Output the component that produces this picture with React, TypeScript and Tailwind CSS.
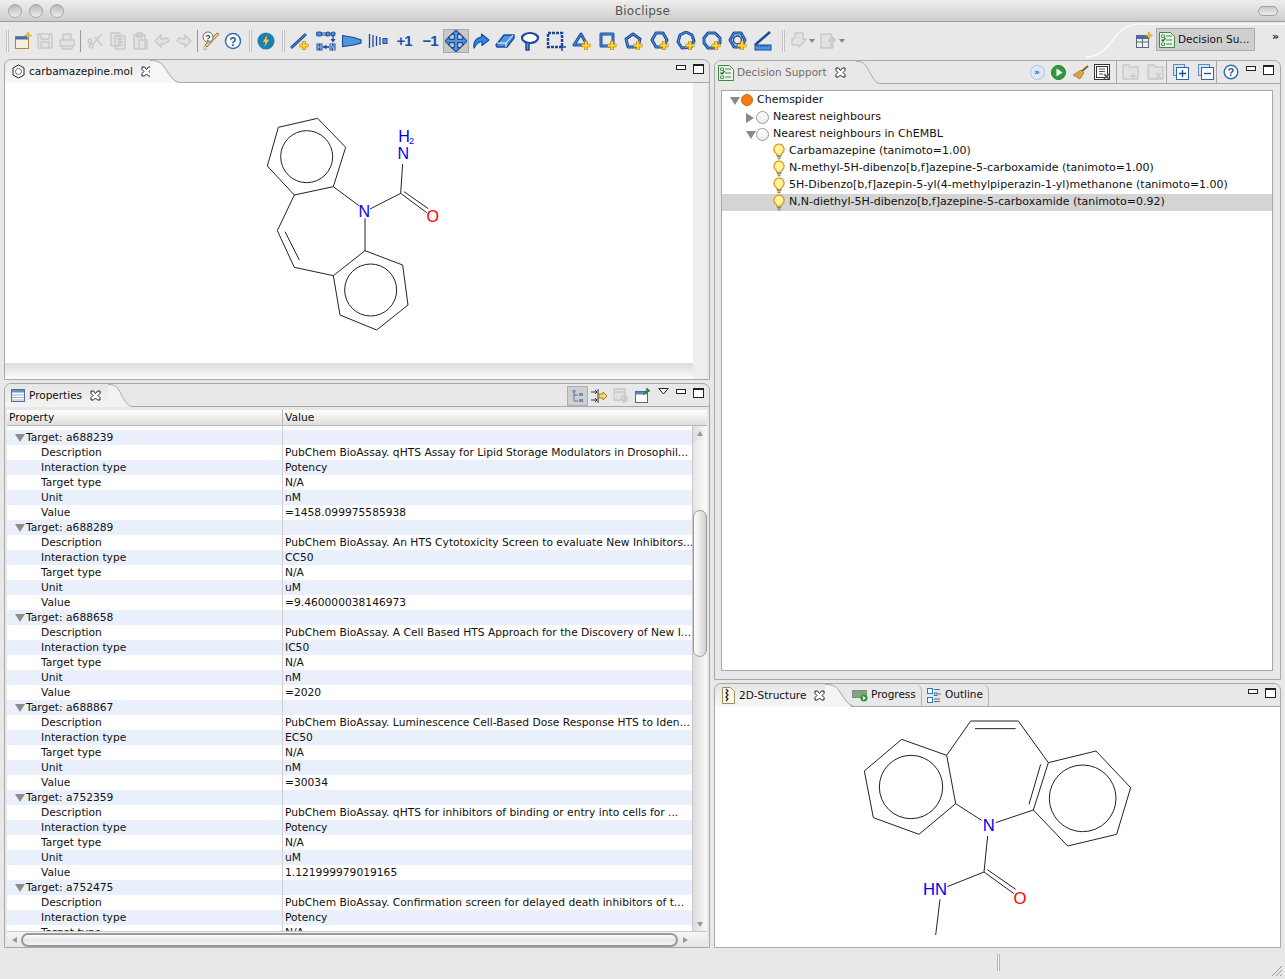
import React from "react";

const F = "font-['DejaVu_Sans',sans-serif]";
const B = "#1b4a9c";
const L = "#4d96de";

function Ic({ children, s = 20 }: { children: React.ReactNode; s?: number }) {
  return <svg width={s} height={s} viewBox="0 0 20 20" fill="none" className="shrink-0">{children}</svg>;
}
const Plus = () => (
  <g>
    <path d="M14 10v9M9.500 14.500h9" stroke="#c98a00" strokeWidth="3.600" />
    <path d="M14 10.500v8M10 14.500h8" stroke="#ffd83a" strokeWidth="1.800" />
  </g>
);
const Poly = ({ pts }: { pts: string }) => (
  <g>
    <polygon points={pts} stroke={B} strokeWidth="3" strokeLinejoin="round" />
    <polygon points={pts} stroke={L} strokeWidth="1" strokeLinejoin="round" />
  </g>
);
const RingPlus = ({ pts }: { pts: string }) => <Ic><Poly pts={pts} /><Plus /></Ic>;

const Grey = ({ d }: { d: string }) => (
  <Ic><path d={d} stroke="#c9c9c9" strokeWidth="1.400" fill="#e2e2e2" strokeLinejoin="round" /></Ic>
);

const icons: Record<string, React.ReactNode> = {
  new: (
    <Ic>
      <rect x="2.500" y="5.500" width="13" height="12" fill="#f5f0dd" stroke="#a8883c" />
      <rect x="2.500" y="5.500" width="13" height="3" fill="#3d6fb5" />
      <path d="M15 1l1 2.500 2.500 1-2.500 1-1 2.500-1-2.500-2.500-1 2.500-1z" fill="#f6c625" stroke="#b58a10" strokeWidth=".5" />
    </Ic>
  ),
  save: <Grey d="M3 3h14v14H3zM6 3v5h8V3M6 17v-6h8v6" />,
  print: <Grey d="M6 3h8v6H6zM3 9h14v6H3zM5 15h10v3H5z" />,
  cut: <Grey d="M16 3L7 13M9 6l7 9M5 13a2 2 0 1 0 .1 0M4 8a2 2 0 1 0 .1 0" />,
  copy: <Grey d="M3 2h9v13H3zM7 5h10v13H7zM9 8h6M9 11h6M9 14h6" />,
  paste: <Grey d="M4 4h11v14H4zM7 2h5v4H7zM9 9h8v9H9z" />,
  undo: <Grey d="M9 4L3 10l6 6v-3h3l5-3-2-3-6 1z" />,
  redo: <Grey d="M11 4l6 6-6 6v-3H8l-5-3 2-3 6 1z" />,
  wiz: (
    <Ic>
      <path d="M18 3l-12 13-2-2L16 2z" fill="#f1cc8f" stroke="#9a7a3a" />
      <circle cx="7" cy="6" r="5" fill="#fff" stroke="#6a6a6a" />
      <text x="7" y="9.500" fontSize="9" fontWeight="700" textAnchor="middle" fill="#444" fontFamily="Liberation Sans">?</text>
      <path d="M3 15l3 3-3 1z" fill="#f3e9c0" stroke="#888" strokeWidth=".5" />
    </Ic>
  ),
  help: (
    <Ic>
      <circle cx="10" cy="10" r="7.500" fill="#fff" stroke="#2f6fb2" strokeWidth="1.500" />
      <text x="10" y="14.500" fontSize="12" fontWeight="700" textAnchor="middle" fill="#1f5a9c" fontFamily="Liberation Sans">?</text>
    </Ic>
  ),
  bolt: (
    <Ic s={18}>
      <circle cx="10" cy="10" r="9.500" fill="#1f7fb5" />
      <path d="M11.500 3L6.500 11h3l-1.500 6 5.500-8.500h-3z" fill="#fbd02c" />
    </Ic>
  ),
  bond: (
    <Ic>
      <path d="M1 17L16 3" stroke={B} strokeWidth="3" />
      <path d="M1 17L16 3" stroke={L} strokeWidth="1" />
      <Plus />
    </Ic>
  ),
  blocks: (
    <Ic>
      <g fill={L} stroke={B} strokeWidth="1.200">
        <rect x=".6" y="1" width="5" height="4" rx="1.500" />
        <circle cx="12" cy="3" r="2" />
        <circle cx="17" cy="3" r="2" />
      </g>
      <path d="M5.500 2h4.500M5.500 4h4.500M17 5v5" stroke={B} strokeWidth="1.100" />
      <path d="M14.500 8l2.500 3.500L19.500 8z" fill={B} />
      <g fill={B}>
        <rect x=".5" y="12.500" width="6" height="7" />
        <rect x="13.500" y="12.500" width="6" height="7" />
      </g>
      <path d="M2 13v6M5 13v6M2 16h3M15 19v-6l3 6v-6" stroke="#bcd8f6" strokeWidth=".9" />
      <path d="M7 16h6" stroke={B} strokeWidth="1.600" />
      <path d="M10.500 13.500L7 16l3.500 2.500z" fill={B} />
    </Ic>
  ),
  wedge: <Ic><path d="M0.500 4.500L12 6.500l7 2.500v3l-7 2-11.500 1.500z" fill={L} stroke={B} strokeWidth="1.200" /></Ic>,
  hash: (
    <Ic>
      <path d="M1.500 3v14M5 4v12M8.500 5v10M12 6v8" stroke={B} strokeWidth="1.300" />
      <rect x="15" y="7.500" width="4" height="5" fill={L} stroke={B} />
    </Ic>
  ),
  plus1: <span className="font-['Liberation_Sans',sans-serif] font-bold text-[15px] leading-none tracking-[-1px] text-[#1b52a8]">+1</span>,
  minus1: <span className="font-['Liberation_Sans',sans-serif] font-bold text-[15px] leading-none tracking-[-1px] text-[#1b52a8]">−1</span>,
  move: (
    <Ic s={22}>
      <path d="M10 0l4 4h-2.500v4.500H16V6l4 4-4 4v-2.500h-4.500V16H14l-4 4-4-4h2.500v-4.500H4V14l-4-4 4-4v2.500h4.500V4H6z" fill={L} stroke={B} strokeWidth="1" />
      <path d="M3 7L7 3M13 3l4 4M17 13l-4 4M7 17l-4-4" stroke={B} strokeWidth="1" />
    </Ic>
  ),
  rotate: (
    <Ic>
      <path d="M3 17C2 10 6 6.500 10.500 6V3l7.500 6-7 5.500v-4C8 10.500 5.500 13 3 17z" fill="#2f8ae6" stroke={B} strokeWidth="1.200" strokeLinejoin="round" />
    </Ic>
  ),
  eraser: (
    <Ic>
      <path d="M1 14L9 4h10v3l-7 9H2z" fill={L} stroke={B} strokeWidth="1.500" strokeLinejoin="round" />
      <path d="M2 12h9l7-8M11 12v4" stroke="#fff" strokeWidth="1" />
    </Ic>
  ),
  lasso: (
    <Ic>
      <ellipse cx="10" cy="7" rx="8" ry="5" fill="#fff" stroke={B} strokeWidth="2.200" />
      <path d="M6 12v7h3v-6" fill={L} stroke={B} strokeWidth="1.500" />
    </Ic>
  ),
  rect: (
    <Ic>
      <rect x="2" y="2" width="14" height="14" stroke={B} strokeWidth="2.500" strokeDasharray="3 1" />
      <path d="M13 16h7M16 13v7" stroke={B} strokeWidth="1.500" />
    </Ic>
  ),
  tri: <RingPlus pts="9,3 2,14 15,14" />,
  sq: <RingPlus pts="3,3 15,3 15,15 3,15" />,
  pent: <RingPlus pts="9,3 16,8 14,16 4,16 2,8" />,
  hex: <RingPlus pts="6,2 13,2 17,9 13,16 6,16 2,9" />,
  hept: <RingPlus pts="10,1 16,4 18,10 15,16 6,17 2,11 4,4" />,
  oct: <RingPlus pts="6,2 13,2 18,7 18,12 13,17 6,17 2,12 2,7" />,
  benz: (
    <Ic>
      <Poly pts="6,2 13,2 17,9 13,16 6,16 2,9" />
      <circle cx="9.500" cy="9" r="4" stroke={B} strokeWidth="1.500" />
      <Plus />
    </Ic>
  ),
  ruler: (
    <Ic>
      <path d="M1 14L16 1" stroke={B} strokeWidth="2.500" />
      <rect x="1" y="14" width="16" height="5" fill={L} stroke={B} />
      <path d="M4 14v2M7 14v2M10 14v2M13 14v2" stroke={B} />
    </Ic>
  ),
  back: <Grey d="M7 2h8v6h3l-7 8-1-2H4V8l3-1z" />,
  fwd: <Grey d="M3 3h10v4l4 1-4 1v8H3zM11 10l3-5 3 5h-2v7h-2v-7z" />,
};

function T({ i, w, cls = "" }: { i: string; w: string; cls?: string }) {
  return <div className={`flex items-center justify-center h-[24px] ${w} ${cls}`}>{icons[i]}</div>;
}
const Dark = ({ cls }: { cls: string }) => <div className={`w-[1px] h-[22px] bg-[#9a9a9a] ${cls}`} />;
const Handle = ({ cls }: { cls: string }) => (
  <div className={`w-[3px] h-[22px] border-x border-x-[#c2c2c2] bg-[#f4f4f4] ${cls}`} />
);
const Drop = () => <div className="w-[8px] h-[24px] flex items-center"><div className="w-0 h-0 border-x-[3px] border-x-transparent border-t-[4px] border-t-[#888]" /></div>;

function Cross() {
  return (
    <svg width="11" height="11" viewBox="0 0 11 11" className="shrink-0">
      <path d="M1 1h2.500L5.500 3.500 7.500 1H10v2.500L8 5.500l2 2V10H7.500l-2-2-2 2H1V7.500l2-2-2-2z" fill="#fff" stroke="#222" strokeWidth="1" />
    </svg>
  );
}
const MinMax = () => (
  <div className="flex items-start gap-[7px] pt-[4px]">
    <div className="w-[10px] h-[5px] border border-[#222] bg-white mt-[1px]" />
    <div className="w-[11px] h-[10px] border border-[#222] border-t-2 bg-white" />
  </div>
);

function Curve({ fill, w = 30 }: { fill: string; w?: number }) {
  return (
    <svg width={w} height="23" viewBox="0 0 30 23" preserveAspectRatio="none" className="shrink-0">
      <path d="M0 0C8 0 11 2 15 8C20 16 24 22 30 22.500V23H0z" fill={fill} />
      <path d="M0 .5C8 .5 11 2 15 8C20 16 24 22 30 22.500" stroke="#a4a4a4" fill="none" />
    </svg>
  );
}

const BenzTab = (
  <svg width="15" height="15" viewBox="0 0 15 15" fill="none">
    <polygon points="7.500,1 13,4 13,11 7.500,14 2,11 2,4" stroke="#222" fill="#fff" />
    <circle cx="7.500" cy="7.500" r="3" stroke="#666" />
  </svg>
);
const TableTab = (
  <svg width="14" height="13" viewBox="0 0 14 13" fill="none">
    <rect x=".5" y=".5" width="13" height="12" fill="#fff" stroke="#50709a" />
    <rect x="1" y="1" width="12" height="2.500" fill="#6a8fc0" />
    <path d="M1 6h12M1 8.500h12M1 11h12" stroke="#9db2cc" />
  </svg>
);
const DecisionIcon = (
  <svg width="16" height="16" viewBox="0 0 16 16" fill="none" className="shrink-0">
    <path d="M.5 .5h11l4 4v11H.5z" fill="#eaf5ea" stroke="#3f8a48" />
    <path d="M2.500 3h3v2.500h-3zM2.500 11h3v2.500h-3z" fill="#fff" stroke="#4c9a54" />
    <path d="M7 4h6M7 8h6M7 12h6" stroke="#3f8a48" />
    <path d="M2.500 7.500l1.500 1.500L6.500 6" stroke="#1e6b28" strokeWidth="1.300" />
  </svg>
);
const StructTab = (
  <svg width="13" height="17" viewBox="0 0 13 17" fill="none">
    <path d="M.5 .5h8l4 4v12H.5z" fill="#fbf7ea" stroke="#a28c5c" />
    <path d="M4 2l2 2-2 2 2 2-2 2 2 2-2 2" stroke="#222" strokeWidth="1.200" />
  </svg>
);
const ProgressTab = (
  <svg width="16" height="13" viewBox="0 0 16 13" fill="none">
    <rect x=".5" y="1.500" width="14" height="7" fill="#7fa57f" stroke="#888" />
    <circle cx="12" cy="9" r="3.500" fill="#2f9a3c" />
    <path d="M11 7l3 2-3 2z" fill="#fff" />
  </svg>
);
const OutlineTab = (
  <svg width="14" height="15" viewBox="0 0 14 15" fill="none">
    <rect x=".5" y=".5" width="5" height="5" fill="#fff" stroke="#2a78c8" />
    <rect x=".5" y="9.500" width="5" height="5" fill="#fff" stroke="#2a78c8" />
    <rect x="7.500" y="5" width="2.500" height="2.500" stroke="#2a78c8" />
    <path d="M7 1.500h6M11 6h3M7 11h6M7 13.500h6" stroke="#666" />
  </svg>
);

function TabLabel({ icon, label, w, dim, pl = "pl-[4px]" }: { icon: React.ReactNode; label: string; w: string; dim?: boolean; pl?: string }) {
  return (
    <div className={`flex items-center h-full ${pl} ${w} rounded-tl-[7px]`}>
      <div className="w-[18px] flex justify-center shrink-0">{icon}</div>
      <span className={`ml-[2px] text-[10.5px] whitespace-nowrap ${dim ? "text-[#6e6e6e]" : "text-[#111]"}`}>{label}</span>
      <div className="ml-[8px]"><Cross /></div>
    </div>
  );
}

function Sep() {
  return <div className="w-[1px] h-full bg-[#a8a8a8]" />;
}

const A = ({ x, children }: { x: string; children: React.ReactNode }) => (
  <div className={`h-full flex items-center justify-center ${x}`}>{children}</div>
);

const groups: [string, string, string][] = [
  ["a688239", "PubChem BioAssay. qHTS Assay for Lipid Storage Modulators in Drosophil...", "Potency|nM|=1458.099975585938"],
  ["a688289", "PubChem BioAssay. An HTS Cytotoxicity Screen to evaluate New Inhibitors...", "CC50|uM|=9.460000038146973"],
  ["a688658", "PubChem BioAssay. A Cell Based HTS Approach for the Discovery of New I...", "IC50|nM|=2020"],
  ["a688867", "PubChem BioAssay. Luminescence Cell-Based Dose Response HTS to Iden...", "EC50|nM|=30034"],
  ["a752359", "PubChem BioAssay. qHTS for inhibitors of binding or entry into cells for ...", "Potency|uM|1.121999979019165"],
  ["a752475", "PubChem BioAssay. Confirmation screen for delayed death inhibitors of t...", "Potency|uM|1"],
];

const Tri = ({ open, c = "#8c8c8c" }: { open: boolean; c?: string }) =>
  open ? (
    <div className="w-0 h-0 border-x-[5px] border-x-transparent border-t-[8px]" style={{ borderTopColor: c }} />
  ) : (
    <div className="w-0 h-0 border-y-[5px] border-y-transparent border-l-[8px]" style={{ borderLeftColor: c }} />
  );

function Row({ a, b, blue, group }: { a: string; b: string; blue: boolean; group?: boolean }) {
  return (
    <div className={`flex h-[15px] leading-[15px] text-[10.7px] text-[#111] whitespace-nowrap ${blue ? "bg-[#e9f0fc]" : "bg-white"}`}>
      <div className={`w-[276px] shrink-0 flex items-center border-r border-r-[#cfcfcf] ${group ? "pl-[8px]" : "pl-[34px]"}`}>
        {group && <div className="mr-[1px] w-[10px]"><Tri open /></div>}
        <span>{a}</span>
      </div>
      <div className="pl-[2px]">{b}</div>
    </div>
  );
}

function PropTable() {
  const rows: React.ReactNode[] = [];
  groups.forEach(([t, d, v]) => {
    const [it, u, val] = v.split("|");
    rows.push(<Row key={t} a={`Target: ${t}`} b="" blue group />);
    rows.push(<Row key={t + "d"} a="Description" b={d} blue={false} />);
    rows.push(<Row key={t + "i"} a="Interaction type" b={it} blue />);
    rows.push(<Row key={t + "t"} a="Target type" b="N/A" blue={false} />);
    rows.push(<Row key={t + "u"} a="Unit" b={u} blue />);
    rows.push(<Row key={t + "v"} a="Value" b={val} blue={false} />);
  });
  return (
    <div className="flex-1 min-h-0 overflow-hidden">
      <div className="-mt-[11px]">
        <Row a="" b="" blue={false} />
        {rows}
      </div>
    </div>
  );
}

const Benzene = ({ pts, c }: { pts: string; c: [number, number, number] }) => (
  <g>
    <polygon points={pts} />
    <circle cx={c[0]} cy={c[1]} r={c[2]} />
  </g>
);

function MolA() {
  return (
    <svg width="210" height="230" viewBox="0 0 630 690" className="ml-[245px] mt-[27px]">
      <g fill="none" stroke="#222" strokeWidth="3">
        <Benzene pts="85,52 203,25 287,112 250,230 133,255 52,168" c={[170, 140, 78]} />
        <Benzene pts="345,422 458,465 474,585 380,660 270,615 250,497" c={[362, 540, 78]} />
        <path d="M133,255L82,362L133,472L250,497M105,365L148,450M250,230L328,288M345,325L345,422M360,297L452,250L458,162M452,250L530,308M462,245L535,296" />
      </g>
      <g fontFamily="Liberation Sans" fontSize="48" textAnchor="middle">
        <text x="343" y="322" fill="#0000ff">N</text>
        <text x="460" y="148" fill="#0000ff">N</text>
        <text x="462" y="95" fill="#0000ff">H</text>
        <text x="485" y="101" fontSize="28" fill="#0000ff">2</text>
        <text x="548" y="336" fill="#ff0000">O</text>
      </g>
    </svg>
  );
}

function MolB() {
  return (
    <svg width="300" height="235" viewBox="0 0 900 705" className="ml-[135px] mt-[4px]">
      <g fill="none" stroke="#222" strokeWidth="3">
        <Benzene pts="155,85 290,133 317,278 207,370 70,320 43,180" c={[183, 228, 95]} />
        <Benzene pts="595,155 738,120 842,230 800,370 653,405 550,297" c={[698, 262, 100]} />
        <path d="M290,133L362,30L505,30L595,155M375,53L497,53M572,160L537,280M317,278L395,328M437,335L550,297M413,375L402,483M402,483L292,527M402,483L492,548M412,476L497,535M270,565L257,672" />
      </g>
      <g fontFamily="Liberation Sans" fontSize="50" textAnchor="middle">
        <text x="416" y="361" fill="#0000ff">N</text>
        <text x="255" y="553" fill="#0000ff">HN</text>
        <text x="510" y="579" fill="#ff0000">O</text>
      </g>
    </svg>
  );
}

const Bulb = (
  <svg width="12" height="17" viewBox="0 0 12 16" fill="none">
    <path d="M6 .7a5 5 0 0 0-3 9c.8.7 1 1.500 1 2.300h4c0-.8.2-1.600 1-2.300a5 5 0 0 0-3-9z" fill="#fff3a0" stroke="#dd9a10" strokeWidth="1.300" />
    <path d="M4 13h4M4.500 15h3" stroke="#888" strokeWidth="1.300" />
  </svg>
);
const Radio = <div className="w-[13px] h-[13px] rounded-full border border-[#9a9a9a] bg-gradient-to-b from-[#fff] to-[#ececec]" />;

function TreeRow({ pad, tri, icon, text, sel }: { pad: string; tri?: boolean; icon: React.ReactNode; text: string; sel?: boolean }) {
  return (
    <div className={`flex items-center h-[17px] ${pad} ${sel ? "bg-[#d4d4d4]" : ""}`}>
      {tri !== undefined && <div className="w-[10px]"><Tri open={tri} c="#8a8a8a" /></div>}
      <div className="w-[13px] flex justify-center mr-[4px] -mt-[1px]">{icon}</div>
      <span className="text-[11px] text-[#111] whitespace-nowrap">{text}</span>
    </div>
  );
}

function MiniIcons() {
  return (
    <div className="ml-auto flex h-full items-stretch">
      <A x="w-[22px]"><div className="w-[15px] h-[15px] rounded-full bg-[#dfe8f8] border border-[#a9c2e8] flex items-center justify-center text-[9px] leading-none font-bold text-[#2a66b8]">»</div></A>
      <A x="w-[21px]"><svg width="15" height="15" viewBox="0 0 15 15"><circle cx="7.500" cy="7.500" r="7" fill="#2f9a3c" stroke="#1f7a2a" /><path d="M5.500 3.500l6 4-6 4z" fill="#fff" /></svg></A>
      <A x="w-[22px]"><svg width="17" height="15" viewBox="0 0 17 15"><path d="M16 1L9 7" stroke="#8a5a1e" strokeWidth="2" /><path d="M9 5l3 3-4 6L1 10z" fill="#d9a441" stroke="#8a6a2a" strokeWidth=".6" /></svg></A>
      <A x="w-[21px] mr-[4px]"><svg width="16" height="16" viewBox="0 0 16 16" fill="none"><rect x=".5" y=".5" width="15" height="15" fill="#fff" stroke="#333" /><rect x="2.500" y="2.500" width="11" height="11" stroke="#333" /><path d="M5 5h6M5 7.500h6M5 10h4" stroke="#555" /><path d="M10 10l5 5M15 10l-5 5" stroke="#555" strokeWidth="1.600" /></svg></A>
      <Sep />
      <A x="w-[28px]"><Grey d="M2 3h6l1 2h8v12H2zM12 11v6M9 14h6" /></A>
      <A x="w-[21px]"><Grey d="M2 3h6l1 2h8v12H2zM10 11l5 5M15 11l-5 5" /></A>
      <Sep />
      <A x="w-[28px]"><svg width="16" height="16" viewBox="0 0 16 16" fill="none"><rect x=".5" y=".5" width="11" height="11" fill="#d8e4f4" stroke="#5a8ac0" /><rect x="3.500" y="3.500" width="12" height="12" fill="#fff" stroke="#2a66a8" /><path d="M9.500 6v7M6 9.500h7" stroke="#1b4a9c" strokeWidth="1.300" /></svg></A>
      <A x="w-[21px]"><svg width="16" height="16" viewBox="0 0 16 16" fill="none"><rect x=".5" y=".5" width="11" height="11" fill="#d8e4f4" stroke="#5a8ac0" /><rect x="3.500" y="3.500" width="12" height="12" fill="#fff" stroke="#2a66a8" /><path d="M6 9.500h7" stroke="#1b4a9c" strokeWidth="1.300" /></svg></A>
      <Sep />
      <A x="w-[27px]"><svg width="16" height="16" viewBox="0 0 20 20" fill="none"><circle cx="10" cy="10" r="8.500" fill="#fff" stroke="#2f6fb2" strokeWidth="1.800" /><text x="10" y="15" fontSize="14" fontWeight="700" textAnchor="middle" fill="#1f5a9c" fontFamily="Liberation Sans">?</text></svg></A>
      <div className="pl-[2px] pr-[6px]"><MinMax /></div>
    </div>
  );
}

export default function App() {
  return (
    <div className={`w-[1285px] h-[979px] bg-[#e8e8e8] flex flex-col overflow-hidden ${F}`}>
      <div className="h-[22px] shrink-0 grid grid-cols-[1fr_auto_1fr] items-center bg-gradient-to-b from-[#efefef] to-[#cdcdcd] border-b border-b-[#9c9c9c]">
        <div className="flex gap-[7px] pl-[8px]">
          {[0, 1, 2].map((k) => (
            <div key={k} className="w-[14px] h-[14px] rounded-full border border-[#a6a6a6] bg-gradient-to-b from-[#b8b8b8] to-[#eeeeee]" />
          ))}
        </div>
        <div className="text-[12px] text-[#555] tracking-[0.2px]">Bioclipse</div>
        <div className="flex justify-end pr-[7px]">
          <div className="w-[20px] h-[10px] rounded-full border border-[#a0a0a0] bg-gradient-to-b from-[#c8c8c8] to-[#eee]" />
        </div>
      </div>

      <div className="h-[37px] shrink-0 flex items-center pl-[6px] bg-[#e8e8e8] relative">
        <svg width="200" height="37" viewBox="0 0 200 37" className="absolute right-0 top-0">
          <path d="M0 35C30 35 25 2 55 2H200" stroke="#fbfbfb" strokeWidth="1.500" fill="none" />
        </svg>
        <Handle cls="" />
        <T i="new" w="w-[22px]" cls="ml-[3px]" />
        <T i="save" w="w-[22px]" />
        <T i="print" w="w-[22px]" />
        <Dark cls="ml-[2px]" />
        <T i="cut" w="w-[22px]" cls="ml-[4px]" />
        <T i="copy" w="w-[22px]" />
        <T i="paste" w="w-[22px]" />
        <T i="undo" w="w-[22px]" />
        <T i="redo" w="w-[22px]" />
        <Dark cls="ml-[2px]" />
        <T i="wiz" w="w-[22px]" cls="ml-[2px]" />
        <T i="help" w="w-[22px]" />
        <Handle cls="ml-[5px]" />
        <T i="bolt" w="w-[22px]" cls="ml-[3px]" />
        <Handle cls="ml-[5px]" />
        <T i="bond" w="w-[26px]" cls="ml-[2px]" />
        <T i="blocks" w="w-[26px]" />
        <T i="wedge" w="w-[26px]" />
        <T i="hash" w="w-[26px]" />
        <T i="plus1" w="w-[26px]" />
        <T i="minus1" w="w-[26px]" />
        <T i="move" w="w-[26px] bg-[#c8c8c8] border border-[#a8a8a8]" />
        <T i="rotate" w="w-[24px]" />
        <T i="eraser" w="w-[24px]" />
        <T i="lasso" w="w-[26px]" />
        <T i="rect" w="w-[26px]" />
        <T i="tri" w="w-[26px]" />
        <T i="sq" w="w-[26px]" />
        <T i="pent" w="w-[26px]" />
        <T i="hex" w="w-[26px]" />
        <T i="hept" w="w-[26px]" />
        <T i="oct" w="w-[26px]" />
        <T i="benz" w="w-[26px]" />
        <T i="ruler" w="w-[26px]" />
        <Handle cls="ml-[5px]" />
        <T i="back" w="w-[22px]" cls="ml-[2px]" />
        <Drop />
        <T i="fwd" w="w-[22px]" />
        <Drop />
        <div className="ml-auto flex items-center relative -mt-[2px]">
          <svg width="18" height="16" viewBox="0 0 18 16" fill="none" className="mr-[2px]">
            <rect x=".5" y="3.500" width="12" height="12" fill="#f4f0e0" stroke="#5a6a80" />
            <rect x="1" y="4" width="11" height="3" fill="#3d6fb5" />
            <path d="M6.500 4v11M1 10h11" stroke="#5a6a80" />
            <path d="M13 0l1 2.500 2.500 1-2.500 1-1 2.500-1-2.500-2.500-1 2.500-1z" fill="#f6c625" stroke="#b58a10" strokeWidth=".5" />
          </svg>
          <div className="w-[99px] h-[23px] flex items-center bg-[#cfcfcf] border border-[#ababab] pl-[2px] gap-[3px]">
            {DecisionIcon}
            <span className="text-[10.5px] text-[#111] whitespace-nowrap">Decision Su...</span>
          </div>
          <div className="w-[30px] h-[23px] pl-[17px] -mt-[7px] text-[11px] font-bold text-[#222] leading-[23px]">»</div>
        </div>
      </div>

      <div className="flex-1 min-h-0 flex pl-[4px] gap-[4px]">
        <div className="w-[706px] flex flex-col gap-[3px]">
          <section className="h-[321px] border border-[#a8a8a8] rounded-t-[7px] flex flex-col">
            <header className="h-[23px] shrink-0 flex">
              <div className="bg-gradient-to-b from-[#e9e9e9] to-[#f8f8f8] rounded-tl-[7px] h-full">
                <TabLabel icon={BenzTab} label="carbamazepine.mol" w="w-[145px]" />
              </div>
              <Curve fill="#f6f6f6" />
              <div className="flex-1 border-b border-b-[#a8a8a8] flex justify-end pr-[5px]"><MinMax /></div>
            </header>
            <div className="flex-1 min-h-0 flex bg-white">
              <div className="flex-1 min-w-0 flex flex-col">
                <div className="flex-1 min-h-0"><MolA /></div>
                <div className="h-[16px] bg-gradient-to-b from-[#dcdcdc] to-[#fbfbfb]" />
              </div>
              <div className="w-[14px] bg-[#eeeeee]" />
              <div className="w-[2px] bg-[#e8e8e8]" />
            </div>
          </section>

          <section className="h-[565px] border border-[#a8a8a8] rounded-t-[7px] flex flex-col">
            <header className="h-[23px] shrink-0 flex">
              <div className="bg-gradient-to-b from-[#e6e6e6] to-[#f4f4f4] rounded-tl-[7px] h-full">
                <TabLabel icon={TableTab} label="Properties" w="w-[103px]" />
              </div>
              <Curve fill="#f2f2f2" w={24} />
              <div className="flex-1 border-b border-b-[#a8a8a8] flex items-start justify-end pr-[5px]">
                <div className="w-[21px] h-[20px] mt-[2px] bg-[#cfcfcf] border border-[#b0b0b0] flex items-center justify-center">
                  <svg width="12" height="13" viewBox="0 0 12 13" fill="none"><path d="M2 1v10h4M2 5h4" stroke="#5a7a9a" /><rect x="7" y="3" width="4" height="3" fill="#6a8fc0" /><rect x="7" y="9" width="4" height="3" fill="#6a8fc0" /><rect x="0.500" y="0" width="3" height="2.500" fill="#6a8fc0" /></svg>
                </div>
                <div className="w-[22px] h-[23px] flex items-center justify-center">
                  <svg width="17" height="14" viewBox="0 0 17 14" fill="none"><path d="M0 3h6M4 1l2 2-2 2M0 11h6M4 9l2 2-2 2M7 0v14" stroke="#333" /><path d="M8 5h4V3l4 4-4 4V9H8z" fill="#f5d67a" stroke="#b5850f" /></svg>
                </div>
                <div className="w-[22px] h-[23px] flex items-center justify-center">
                  <Grey d="M3 3h11v11H3zM3 6h11M10 11l3-2v2h3v4h-3v2z" />
                </div>
                <div className="w-[22px] h-[23px] flex items-center justify-center">
                  <svg width="16" height="15" viewBox="0 0 16 15" fill="none"><rect x=".5" y="3.500" width="12" height="11" fill="#fff" stroke="#4a6a90" /><rect x="1" y="4" width="11" height="2.500" fill="#5a85bd" /><path d="M9 6l2-3 1-3 3 3-3 1-3 2zM8 7l2-2" fill="#2f9a3c" stroke="#1e7a2a" strokeWidth=".7" /></svg>
                </div>
                <div className="w-[18px] h-[23px] flex justify-center pt-[4px]">
                  <svg width="11" height="7" viewBox="0 0 11 7" fill="none"><path d="M.8 .5h9.400L5.500 6z" fill="#f4f4f4" stroke="#222" /></svg>
                </div>
                <div className="ml-[4px]"><MinMax /></div>
              </div>
            </header>
            <div className="flex-1 min-h-0 flex flex-col pt-[3px] pl-[2px] pr-[2px]">
              <div className="flex h-[16px] shrink-0 bg-gradient-to-b from-[#ffffff] to-[#dedede] text-[10.7px] leading-[15px] text-[#111] border-b border-b-[#b8b8b8]">
                <div className="w-[276px] pl-[2px] border-r border-r-[#b8b8b8]">Property</div>
                <div className="pl-[2px]">Value</div>
              </div>
              <div className="flex-1 min-h-0 flex">
                <div className="flex-1 min-w-0 flex flex-col"><PropTable /></div>
                <div className="w-[15px] shrink-0 flex flex-col items-stretch bg-gradient-to-r from-[#dcdcdc] to-[#fafafa] border-l border-l-[#c8c8c8]">
                  <div className="h-[14px] flex items-center justify-center"><div className="w-0 h-0 border-x-[3px] border-x-transparent border-b-[5px] border-b-[#999]" /></div>
                  <div className="h-[70px] rounded-t-full bg-gradient-to-r from-[#e6e6e6] to-[#fbfbfb]" />
                  <div className="h-[147px] rounded-full border border-[#9c9c9c] bg-gradient-to-r from-[#fdfdfd] via-[#e8e8e8] to-[#cfcfcf]" />
                  <div className="flex-1" />
                  <div className="h-[14px] flex items-center justify-center"><div className="w-0 h-0 border-x-[3px] border-x-transparent border-t-[5px] border-t-[#999]" /></div>
                </div>
              </div>
              <div className="h-[16px] shrink-0 flex items-center bg-gradient-to-b from-[#f6f6f6] to-[#e4e4e4] border-t border-t-[#c8c8c8] pr-[15px]">
                <div className="w-[14px] flex justify-center"><div className="w-0 h-0 border-y-[3px] border-y-transparent border-r-[5px] border-r-[#999]" /></div>
                <div className="flex-1 h-[14px] rounded-full border-2 border-[#9a9a9a] bg-gradient-to-b from-[#fdfdfd] via-[#e6e6e6] to-[#f4f4f4]" />
                <div className="w-[14px] flex justify-center"><div className="w-0 h-0 border-y-[3px] border-y-transparent border-l-[5px] border-l-[#999]" /></div>
              </div>
            </div>
          </section>
        </div>

        <div className="w-[567px] flex flex-col gap-[3px] pt-[1px]">
          <section className="h-[620px] border border-[#a8a8a8] rounded-t-[7px] flex flex-col">
            <header className="h-[23px] shrink-0 flex">
              <div className="bg-[#e8e8e8] rounded-tl-[7px] h-full">
                <TabLabel icon={DecisionIcon} label="Decision Support" w="w-[141px]" dim pl="pl-[2px]" />
              </div>
              <Curve fill="#e8e8e8" w={24} />
              <div className="flex-1 border-b border-b-[#a8a8a8] flex"><MiniIcons /></div>
            </header>
            <div className="flex-1 min-h-0 pt-[6px] pl-[6px] pr-[7px] pb-[8px]">
              <div className="h-full border border-[#a8a8a8] bg-white pt-[1px]">
                <TreeRow pad="pl-[8px]" tri icon={<div className="w-[12px] h-[12px] rounded-full bg-[#f57c15] border border-[#d0660c]" />} text="Chemspider" />
                <TreeRow pad="pl-[24px]" tri={false} icon={Radio} text="Nearest neighbours" />
                <TreeRow pad="pl-[24px]" tri icon={Radio} text="Nearest neighbours in ChEMBL" />
                <TreeRow pad="pl-[50px]" icon={Bulb} text="Carbamazepine (tanimoto=1.00)" />
                <TreeRow pad="pl-[50px]" icon={Bulb} text="N-methyl-5H-dibenzo[b,f]azepine-5-carboxamide (tanimoto=1.00)" />
                <TreeRow pad="pl-[50px]" icon={Bulb} text="5H-Dibenzo[b,f]azepin-5-yl(4-methylpiperazin-1-yl)methanone (tanimoto=1.00)" />
                <TreeRow pad="pl-[50px]" icon={Bulb} text="N,N-diethyl-5H-dibenzo[b,f]azepine-5-carboxamide (tanimoto=0.92)" sel />
              </div>
            </div>
          </section>

          <section className="h-[265px] border border-[#a8a8a8] rounded-t-[7px] flex flex-col">
            <header className="h-[23px] shrink-0 flex">
              <div className="bg-gradient-to-b from-[#e6e6e6] to-[#f6f6f6] rounded-tl-[7px] h-full">
                <TabLabel icon={StructTab} label="2D-Structure" w="w-[110px]" />
              </div>
              <Curve fill="#f4f4f4" />
              <div className="h-full border-b border-b-[#a8a8a8] -ml-[4px] w-[71px] flex items-center gap-[3px] border-r border-r-[#b0b0b0] rounded-tr-[7px] pl-[1px]">
                {ProgressTab}<span className="text-[10.5px] text-[#111]">Progress</span>
              </div>
              <div className="h-full border-b border-b-[#a8a8a8] w-[67px] flex items-center gap-[4px] border-r border-r-[#b0b0b0] rounded-tr-[7px] pl-[5px]">
                {OutlineTab}<span className="text-[10.5px] text-[#111]">Outline</span>
              </div>
              <div className="flex-1 border-b border-b-[#a8a8a8] flex justify-end pr-[4px]"><MinMax /></div>
            </header>
            <div className="flex-1 min-h-0 bg-white"><MolB /></div>
          </section>
        </div>
      </div>

      <div className="h-[31px] shrink-0 flex items-start relative">
        <div className="ml-[997px] mt-[6px] w-[3px] h-[17px] border-x border-x-[#b4b4b4] bg-[#f4f4f4]" />
        <svg width="12" height="12" viewBox="0 0 12 12" className="absolute right-[2px] bottom-[2px]">
          <path d="M1 11L11 1M5 11l6-6M9 11l2-2" stroke="#999" fill="none" />
        </svg>
      </div>
    </div>
  );
}
